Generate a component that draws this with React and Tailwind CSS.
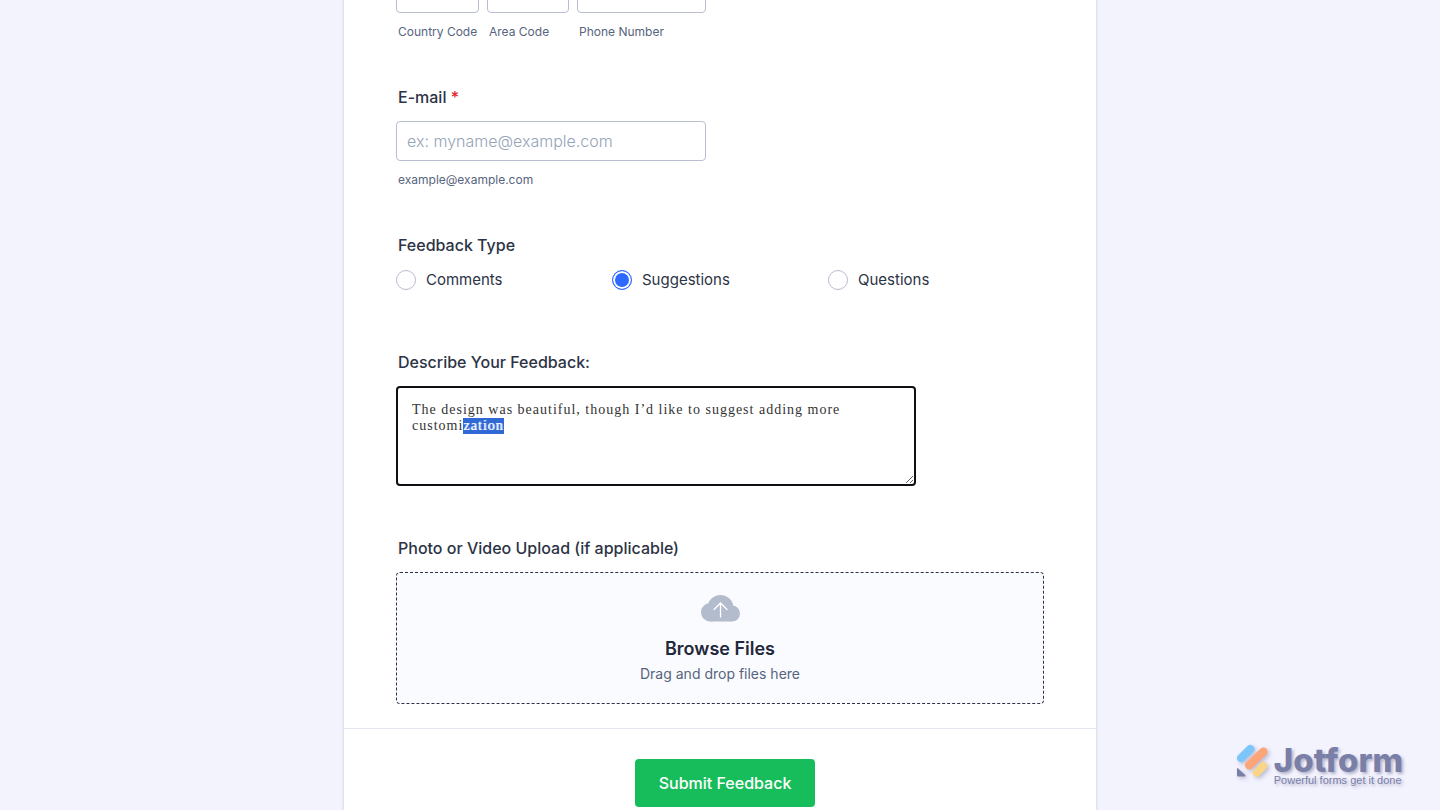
import { useEffect, useRef } from "react";

const PHONE_FIELDS = [
  { id: "country-code", label: "Country Code", width: "w-[83px]" },
  { id: "area-code", label: "Area Code", width: "w-[82px]" },
  { id: "phone-number", label: "Phone Number", width: "w-[129px]" },
];

const FEEDBACK_TYPES = ["Comments", "Suggestions", "Questions"];

const FEEDBACK_TEXT =
  "The design was beautiful, though I’d like to suggest adding more customization";

const labelClass =
  "mb-[14px] block px-0.5 text-base leading-5 font-medium text-[#2c3345]";
const subLabelClass =
  "mt-3 block px-0.5 text-xs leading-[14px] whitespace-nowrap text-[#57647e]";
const inputClass =
  "h-10 rounded-[4px] border border-[#b8bdd0] bg-white px-2.5 text-base text-[#2c3345] outline-none placeholder:text-[#95a3b8]";

function PhoneRow() {
  return (
    <div className="flex gap-2">
      {PHONE_FIELDS.map(({ id, label, width }) => (
        <div key={id} className={width}>
          <input id={id} type="tel" className={`${inputClass} block w-full`} />
          <label htmlFor={id} className={subLabelClass}>
            {label}
          </label>
        </div>
      ))}
    </div>
  );
}

function EmailField() {
  return (
    <div>
      <label htmlFor="email" className={labelClass}>
        E-mail <span className="text-[#e02424]">*</span>
      </label>
      <input
        id="email"
        type="email"
        placeholder="ex: myname@example.com"
        aria-describedby="email-hint"
        className={`${inputClass} block w-full max-w-[310px] font-light`}
      />
      <span id="email-hint" className={subLabelClass}>
        example@example.com
      </span>
    </div>
  );
}

function FeedbackType() {
  return (
    <fieldset className="pb-[13px]">
      <legend className={labelClass}>Feedback Type</legend>
      <div className="grid grid-cols-3">
        {FEEDBACK_TYPES.map((type) => (
          <label
            key={type}
            className="flex items-center gap-2.5 text-[15px] leading-[22px] text-[#2c3345]"
          >
            <input
              type="radio"
              name="feedback-type"
              defaultChecked={type === "Suggestions"}
              className="size-5 appearance-none rounded-full border border-[#b8bdd0] bg-white checked:border-[#2e69ff] checked:bg-[#2e69ff] checked:shadow-[inset_0_0_0_2px_white]"
            />
            {type}
          </label>
        ))}
      </div>
    </fieldset>
  );
}

function FeedbackText() {
  const ref = useRef(null);

  useEffect(() => {
    const start = FEEDBACK_TEXT.indexOf("zation");
    ref.current.focus({ preventScroll: true });
    ref.current.setSelectionRange(start, FEEDBACK_TEXT.length);
  }, []);

  return (
    <div className="pb-1">
      <label htmlFor="feedback" className={labelClass}>
        Describe Your Feedback:
      </label>
      <textarea
        id="feedback"
        ref={ref}
        spellCheck={false}
        defaultValue={FEEDBACK_TEXT}
        className="block h-[100px] w-full max-w-[520px] resize rounded-[4px] border-2 border-[#101014] bg-white px-3.5 py-3.5 font-['Liberation_Serif',serif] text-sm leading-4 tracking-[1px] text-[#333333] outline-none selection:bg-[#3069d6] selection:text-white selection:[text-shadow:1px_0_0_rgba(255,255,255,0.6)]"
      />
    </div>
  );
}

function CloudUpload() {
  return (
    <svg width="39" height="27" viewBox="0 0 39 27" aria-hidden="true">
      <g fill="#b3bccc">
        <circle cx="9.200" cy="17.300" r="9.200" />
        <circle cx="19.500" cy="13" r="13" />
        <circle cx="31" cy="18.500" r="8" />
        <rect x="9" y="16" width="22" height="10.500" />
      </g>
      <path
        d="M19.500 22V8.500M13 14.500l6.500-6.500 6.500 6.500"
        fill="none"
        stroke="white"
        strokeWidth="1.300"
        strokeLinecap="round"
      />
    </svg>
  );
}

function UploadField() {
  return (
    <div>
      <span id="upload-label" className={labelClass}>
        Photo or Video Upload (if applicable)
      </span>
      <button
        type="button"
        aria-describedby="upload-label"
        className="flex h-[132px] w-full flex-col items-center rounded-[4px] border border-dashed border-[#2c3345] bg-[#fafbff] pt-[22px]"
      >
        <CloudUpload />
        <span className="mt-[15px] text-lg leading-6 font-semibold text-[#23283a]">
          Browse Files
        </span>
        <span className="mt-[3px] text-sm leading-5 text-[#57647e]">
          Drag and drop files here
        </span>
      </button>
    </div>
  );
}

function Watermark() {
  return (
    <div className="absolute right-[37px] bottom-6 flex text-[#7a7fa8]">
      <svg
        width="37"
        height="44"
        viewBox="7 4 37 44"
        strokeLinecap="round"
        className="drop-shadow-[2px_2px_2px_rgba(60,60,110,0.3)]"
        aria-hidden="true"
      >
        <path d="M11 20.200 20.300 10.900" stroke="#7cc6fc" strokeWidth="8" />
        <path d="M19.200 27.200 33.300 13.700" stroke="#fba579" strokeWidth="8.500" />
        <path d="M26.700 34.700 33.300 28" stroke="#fad587" strokeWidth="8" />
        <path d="M7 31q0-1.500 1.200-.5l7 6.500q1.200 1.500-.5 1.500H8q-1 0-1-1Z" fill="#7a7fa8" />
      </svg>
      <div className="[text-shadow:2px_2px_3px_rgba(60,60,110,0.35)]">
        <div className="pt-1 text-[33px] leading-7 font-extrabold">Jotform</div>
        <div className="font-['Liberation_Sans',sans-serif] text-[11px] leading-3">
          Powerful forms get it done
        </div>
      </div>
    </div>
  );
}

export default function App() {
  return (
    <div className="relative h-screen overflow-hidden bg-[#f3f3fe] font-[Inter,sans-serif]">
      <form className="mx-auto -mt-[27px] min-h-full w-full max-w-[752px] bg-white pb-10 shadow-[0_0_3px_rgba(87,100,126,0.3)]">
        <div className="flex flex-col gap-12 px-[52px] pb-6">
          <PhoneRow />
          <EmailField />
          <FeedbackType />
          <FeedbackText />
          <UploadField />
        </div>
        <div className="flex justify-center border-t border-[#e3e5f0] pt-[30px] pl-2.5">
          <button
            type="submit"
            className="h-12 w-[180px] rounded-[4px] bg-[#18bd5b] text-base font-medium text-white"
          >
            Submit Feedback
          </button>
        </div>
      </form>
      <Watermark />
    </div>
  );
}
